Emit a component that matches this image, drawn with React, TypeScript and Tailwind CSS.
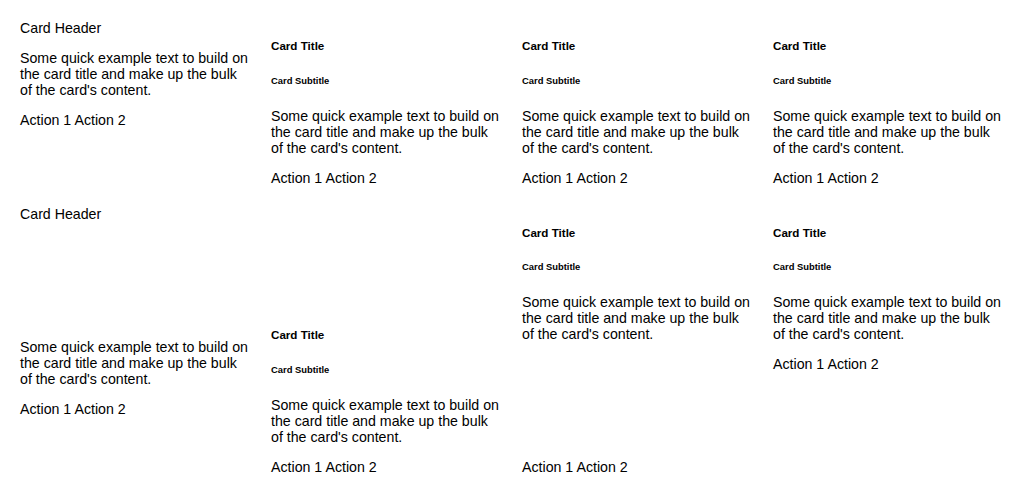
const TEXT = "Some quick example text to build on the card title and make up the bulk of the card's content.";

const Title = () => (
  <>
    <h5 className="mt-[19.4px] text-[11.62px] font-bold leading-[normal]">Card Title</h5>
    <h6 className="mt-[23.9px] text-[9.38px] font-bold leading-[normal]">Card Subtitle</h6>
  </>
);

const Body = ({ gap = "mt-[21.9px]" }: { gap?: string }) => (
  <p className={`${gap} leading-[16px]`}>{TEXT}</p>
);

const Actions = ({ className = "" }: { className?: string }) => (
  <div className={`mt-[14px] mb-[14px] leading-[16px] ${className}`}>
    <span>Action 1</span> <span>Action 2</span>
  </div>
);

const App = () => {
  return (
    <div
      className="min-h-screen bg-white px-5 pt-5 text-[14.2px] text-black"
      style={{ fontFamily: '"Liberation Sans", Arial, sans-serif' }}
    >
      <div className="grid grid-cols-4 items-start gap-x-5">
        <div className="flex flex-col">
          <div className="leading-[16px]">Card Header</div>
          <Body gap="mt-[14px]" />
          <Actions />
        </div>
        {[0, 1, 2].map((i) => (
          <div key={i} className="flex flex-col">
            <Title />
            <Body />
            <Actions />
          </div>
        ))}
      </div>

      <div className="mt-[6px] grid h-[283px] grid-cols-4 gap-x-5">
        <div className="flex flex-col">
          <div className="leading-[16px]">Card Header</div>
          <Body gap="mt-[117px]" />
          <Actions />
        </div>
        <div className="flex flex-col justify-end">
          <Title />
          <Body />
          <Actions />
        </div>
        <div className="flex flex-col">
          <Title />
          <Body />
          <Actions className="!mt-auto" />
        </div>
        <div className="flex flex-col">
          <Title />
          <Body />
          <Actions />
        </div>
      </div>
    </div>
  );
};

export default App;
